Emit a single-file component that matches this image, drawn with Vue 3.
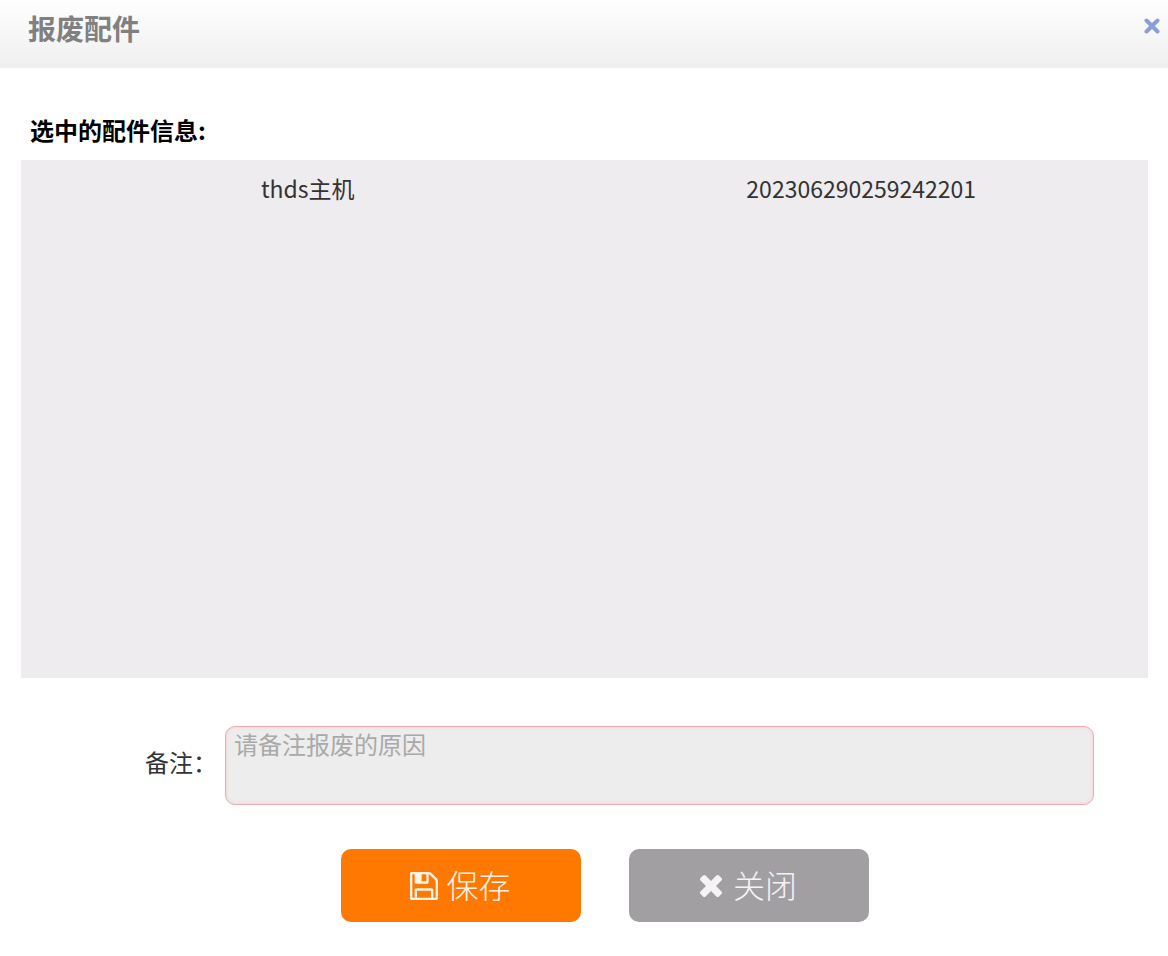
<script setup>
import { ref } from 'vue'

const remark = ref('')
const parts = ref([{ name: 'thds主机', code: '202306290259242201' }])
</script>

<template>
  <section class="dialog" role="dialog" aria-labelledby="dialog-title">
    <header class="titlebar">
      <h1 id="dialog-title">报废配件</h1>
      <button class="dismiss" type="button" aria-label="关闭窗口">
        <svg viewBox="0 0 16 16" aria-hidden="true">
          <path d="M2.500 2.500L13.500 13.500M13.500 2.500L2.500 13.500" />
        </svg>
      </button>
    </header>

    <form class="content" @submit.prevent>
      <h2 id="parts-title">选中的配件信息:</h2>
      <div class="panel">
        <table aria-labelledby="parts-title">
          <tbody>
            <tr v-for="part in parts" :key="part.code">
              <td>{{ part.name }}</td>
              <td>{{ part.code }}</td>
            </tr>
          </tbody>
        </table>
      </div>

      <div class="field">
        <label for="remark">备注：</label>
        <textarea id="remark" v-model="remark" placeholder="请备注报废的原因"></textarea>
      </div>

      <div class="actions">
        <button class="save" type="submit">
          <svg class="disk" viewBox="0 128 1536 1536" aria-hidden="true">
            <path d="M384 1536h768v-384h-768v384zm896 0h128v-896q0-14-10-38.500t-20-34.500l-281-281q-10-10-34-20t-39-10v416q0 40-28 68t-68 28h-576q-40 0-68-28t-28-68v-416h-128v1280h128v-416q0-40 28-68t68-28h832q40 0 68 28t28 68v416zm-384-928v-320q0-13-9.500-22.500t-22.500-9.500h-192q-13 0-22.500 9.500t-9.500 22.500v320q0 13 9.500 22.500t22.500 9.500h192q13 0 22.500-9.500t9.500-22.500zm640 32v928q0 40-28 68t-68 28h-1344q-40 0-68-28t-28-68v-1344q0-40 28-68t68-28h928q40 0 88 20t76 48l280 280q28 28 48 76t20 88z" />
          </svg>
          <span>保存</span>
        </button>
        <button class="cancel" type="button">
          <svg class="cross" viewBox="302 366 1188 1188" aria-hidden="true">
            <path d="M1490 1322q0 40-28 68l-136 136q-28 28-68 28t-68-28l-294-294-294 294q-28 28-68 28t-68-28l-136-136q-28-28-28-68t28-68l294-294-294-294q-28-28-28-68t28-68l136-136q28-28 68-28t68 28l294 294 294-294q28-28 68-28t68 28l136 136q28 28 28 68t-28 68l-294 294 294 294q28 28 28 68z" />
          </svg>
          <span>关闭</span>
        </button>
      </div>
    </form>
  </section>
</template>

<style>
body {
  background: #fff;
}
</style>

<style scoped>
.dialog {
  font-family: "Noto Sans CJK SC", "Noto Sans", sans-serif;
  color: #333;
  background: #fff;
}

.titlebar {
  display: flex;
  align-items: flex-start;
  justify-content: space-between;
  box-sizing: border-box;
  height: 68px;
  padding: 8px 8px 0 28px;
  background: linear-gradient(#fefefe, #efefef);
}

h1 {
  margin: 0;
  font-size: 28px;
  line-height: 40px;
  font-weight: 700;
  color: #808080;
}

.dismiss {
  display: flex;
  margin: 0;
  padding: 10px 0;
  border: 0;
  background: none;
  cursor: pointer;
}

.dismiss svg {
  width: 16px;
  height: 16px;
  fill: none;
  stroke: #8b9fd3;
  stroke-width: 4;
  stroke-linecap: round;
}

.content {
  padding: 46px 20px 32px 21px;
}

h2 {
  margin: 0;
  padding: 0 9px;
  font-size: 24px;
  line-height: 32px;
  font-weight: 700;
  color: #000;
}

.panel {
  box-sizing: border-box;
  min-height: 518px;
  margin-top: 14px;
  padding: 12px 10px;
  background: #eeecee;
}

table {
  width: 100%;
  table-layout: fixed;
  border-collapse: collapse;
}

td {
  padding: 0;
  font-size: 23px;
  line-height: 32px;
  text-align: center;
}

.field {
  display: flex;
  align-items: center;
  gap: 8px;
  margin-top: 48px;
  padding: 0 54px 0 124px;
}

label {
  flex: none;
  padding-bottom: 8px;
  font-size: 24px;
  line-height: 32px;
}

textarea {
  flex: 1;
  min-width: 0;
  box-sizing: border-box;
  height: 79px;
  padding: 1px 8px;
  border: 1px solid #efa9b0;
  border-radius: 10px;
  box-shadow: inset 0 0 3px 1px #fbd5d9;
  background: #ededed;
  color: #333;
  font-family: inherit;
  font-size: 24px;
  line-height: 32px;
  resize: none;
}

textarea::placeholder {
  color: #a9a9a9;
  opacity: 1;
}

.actions {
  display: flex;
  justify-content: center;
  gap: 48px;
  margin-top: 44px;
  padding-left: 40px;
}

.actions button {
  display: flex;
  align-items: center;
  justify-content: center;
  gap: 8px;
  width: 240px;
  height: 73px;
  padding: 0;
  border: 0;
  border-radius: 10px;
  color: #fff4ea;
  font-family: inherit;
  font-size: 32px;
  line-height: 48px;
  font-weight: 300;
  cursor: pointer;
}

.actions span {
  padding-bottom: 4px;
}

.actions svg {
  fill: currentColor;
}

.actions .save {
  background: #ff7800;
}

.actions .cancel {
  gap: 11px;
  background: #a19fa1;
  color: #f5f3f5;
}

.disk {
  width: 28px;
  height: 28px;
}

.cross {
  width: 22px;
  height: 22px;
}
</style>
